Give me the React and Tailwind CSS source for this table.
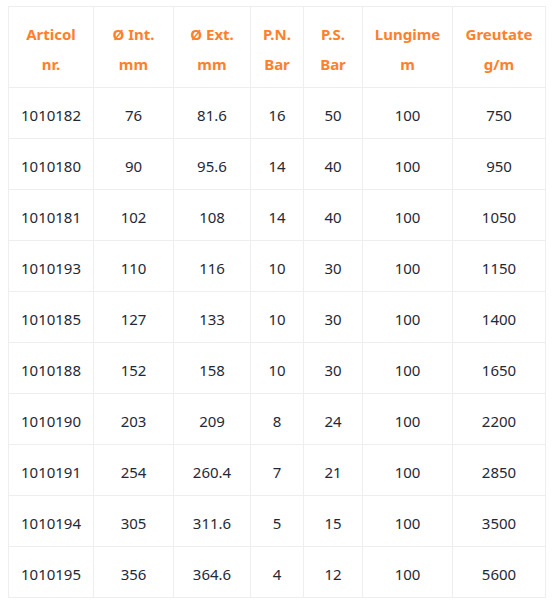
import React from "react";

const rows = [
  ["1010182", "76", "81.6", "16", "50", "100", "750"],
  ["1010180", "90", "95.6", "14", "40", "100", "950"],
  ["1010181", "102", "108", "14", "40", "100", "1050"],
  ["1010193", "110", "116", "10", "30", "100", "1150"],
  ["1010185", "127", "133", "10", "30", "100", "1400"],
  ["1010188", "152", "158", "10", "30", "100", "1650"],
  ["1010190", "203", "209", "8", "24", "100", "2200"],
  ["1010191", "254", "260.4", "7", "21", "100", "2850"],
  ["1010194", "305", "311.6", "5", "15", "100", "3500"],
  ["1010195", "356", "364.6", "4", "12", "100", "5600"],
];

const headers = [
  ["Articol", "nr."],
  ["Ø Int.", "mm"],
  ["Ø Ext.", "mm"],
  ["P.N.", "Bar"],
  ["P.S.", "Bar"],
  ["Lungime", "m"],
  ["Greutate", "g/m"],
];

const widths = ["w-[85px]", "w-[80px]", "w-[77px]", "w-[53px]", "w-[59px]", "w-[90px]", "w-[93px]"];

export default function App() {
  return (
    <div className="bg-white px-2 pt-[6px] font-['Noto_Sans',sans-serif] text-[15px] leading-[30px]">
      <table className="w-[538px] table-fixed border-collapse">
        <colgroup>
          {widths.map((w, i) => (
            <col key={i} className={w} />
          ))}
        </colgroup>
        <thead>
          <tr>
            {headers.map(([a, b], i) => (
              <th key={i} className="border border-[#eeeeee] px-1 pt-[12px] pb-[8px] text-center font-bold text-[#ff7f2a]">
                {a}
                <br />
                {b}
              </th>
            ))}
          </tr>
        </thead>
        <tbody>
          {rows.map((r, i) => (
            <tr key={i}>
              {r.map((c, j) => (
                <td key={j} className="border border-[#eeeeee] px-1 pt-[12px] pb-[8px] text-center text-[#1f2937]">
                  {c}
                </td>
              ))}
            </tr>
          ))}
        </tbody>
      </table>
    </div>
  );
}
